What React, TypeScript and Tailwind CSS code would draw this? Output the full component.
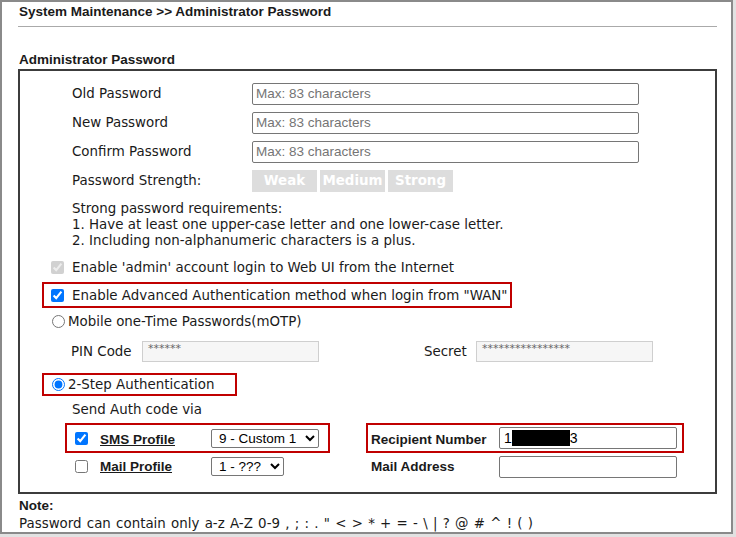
import React from 'react';

const verdana = 'font-["DejaVu_Sans",Verdana,sans-serif]';
const arial = 'font-["Liberation_Sans",Arial,sans-serif]';

function PwRow({ label }: { label: string }) {
    return (
        <div className="flex h-[29px] items-center pl-[52px]">
            <span className={`w-[180px] pt-[2px] text-[13.4px] text-[#1a1a1a] ${verdana}`}>{label}</span>
            <input
                type="password"
                placeholder="Max: 83 characters"
                className={`h-[22px] w-[387px] rounded-[2px] border border-[#767676] px-[3px] text-[13.5px] placeholder:text-[#757575] ${arial}`}
            />
        </div>
    );
}

export default function App() {
    return (
        <div className="h-[537px] w-[736px] bg-[#e2e2e2]">
            <div className="h-[534px] w-[733px] border-2 border-[#8a8a8a] bg-white">
                <div className={`h-[24px] pl-[17px] pt-[2px] text-[13.5px] font-bold leading-[16px] text-[#1a1a1a] ${arial}`}>
                    System Maintenance &gt;&gt; Administrator Password
                </div>
                <div className="ml-[16px] h-px w-[699px] bg-[#aaaaaa]" />

                <div className={`ml-[17px] mt-[25px] text-[13.5px] font-bold leading-[16px] text-[#1a1a1a] ${arial}`}>
                    Administrator Password
                </div>

                <div className="ml-[16px] mt-px w-[699px] border-2 border-[#3c3c3c] pb-[15px] pt-[8px]">
                    <PwRow label="Old Password" />
                    <PwRow label="New Password" />
                    <PwRow label="Confirm Password" />
                    <div className="flex h-[29px] items-center pl-[52px]">
                        <span className={`w-[180px] pt-[2px] text-[13.4px] text-[#1a1a1a] ${verdana}`}>Password Strength:</span>
                        <div className={`flex gap-[3px] text-[13.4px] font-bold text-white ${verdana}`}>
                            <span className="flex h-[22px] w-[65px] items-center justify-center bg-[#dddddd] pt-[2px]">Weak</span>
                            <span className="flex h-[22px] w-[65px] items-center justify-center bg-[#dddddd] pt-[2px]">Medium</span>
                            <span className="flex h-[22px] w-[65px] items-center justify-center bg-[#dddddd] pt-[2px]">Strong</span>
                        </div>
                    </div>

                    <div className={`mt-[6px] pl-[52px] text-[13.4px] leading-[16px] text-[#1a1a1a] ${verdana}`}>
                        <div>Strong password requirements:</div>
                        <div>1. Have at least one upper-case letter and one lower-case letter.</div>
                        <div>2. Including non-alphanumeric characters is a plus.</div>
                    </div>

                    <div className={`mt-[8px] flex h-[20px] items-center pl-[31px] text-[13.4px] text-[#1a1a1a] ${verdana}`}>
                        <input type="checkbox" checked disabled readOnly className="m-0 h-[13px] w-[13px]" />
                        <span className="ml-[8px] pt-[2px]">Enable 'admin' account login to Web UI from the Internet</span>
                    </div>

                    <div className={`ml-[22px] mt-[5px] flex h-[26px] w-[470px] items-center border-2 border-[#c00000] pl-[7px] text-[13.4px] text-[#1a1a1a] ${verdana}`}>
                        <input type="checkbox" checked readOnly className="m-0 h-[13px] w-[13px] accent-[#0075ff]" />
                        <span className="ml-[8px] pt-[2px]">Enable Advanced Authentication method when login from "WAN"</span>
                    </div>

                    <div className={`mt-[3px] flex h-[20px] items-center pl-[32px] text-[13.4px] text-[#1a1a1a] ${verdana}`}>
                        <input type="radio" name="m" readOnly className="m-0 h-[13px] w-[13px]" />
                        <span className="ml-[3px] pt-[2px]">Mobile one-Time Passwords(mOTP)</span>
                    </div>

                    <div className={`mt-[8px] flex h-[24px] items-center text-[13.4px] text-[#1a1a1a] ${verdana}`}>
                        <span className="w-[122px] pl-[51px] pt-[2px]">PIN Code</span>
                        <div className="h-[21px] w-[177px] border border-[#cfcfcf] bg-[#f6f6f6] pl-[5px] text-[11px] leading-[14px] text-[#666]">
                            ******
                        </div>
                        <span className="ml-[105px] w-[52px] pt-[2px]">Secret</span>
                        <div className="h-[21px] w-[177px] border border-[#cfcfcf] bg-[#f6f6f6] pl-[5px] text-[11px] leading-[14px] text-[#666]">
                            ****************
                        </div>
                    </div>

                    <div className={`ml-[22px] mt-[10px] flex h-[23px] w-[195px] items-center border-2 border-[#c00000] pl-[8px] text-[13.4px] text-[#1a1a1a] ${verdana}`}>
                        <input type="radio" name="m" checked readOnly className="m-0 h-[13px] w-[13px] accent-[#0075ff]" />
                        <span className="ml-[3px] pt-[2px]">2-Step Authentication</span>
                    </div>

                    <div className={`mt-[6px] pl-[52px] text-[13.4px] leading-[16px] text-[#1a1a1a] ${verdana}`}>Send Auth code via</div>

                    <div className={`mt-[5px] flex text-[13.5px] font-bold text-[#1a1a1a] ${arial}`}>
                        <div className="ml-[45px] flex h-[30px] w-[265px] items-center border-2 border-[#c00000] pl-[8px]">
                            <input type="checkbox" checked readOnly className="m-0 h-[13px] w-[13px] accent-[#0075ff]" />
                            <span className="ml-[12px] mt-[4px] w-[111px] underline">SMS Profile</span>
                            <select className="h-[19px] w-[108px] rounded-[2px] border border-[#767676] pl-[3px] text-[13.5px] font-normal text-black">
                                <option>9 - Custom 1</option>
                            </select>
                        </div>
                        <div className="ml-[36px] flex h-[30px] w-[318px] items-center border-2 border-[#c00000] pl-[3px]">
                            <span className="mt-[4px] w-[128px]">Recipient Number</span>
                            <div className="flex h-[22px] w-[178px] items-center rounded-[2px] border border-[#767676] pl-[4px] text-[14px] font-normal text-black">
                                1<span className="h-[16px] w-[58px] bg-black" />3
                            </div>
                        </div>
                    </div>

                    <div className={`mt-[3px] flex h-[21px] items-center text-[13.5px] font-bold text-[#1a1a1a] ${arial}`}>
                        <input type="checkbox" readOnly className="m-0 ml-[55px] h-[13px] w-[13px]" />
                        <span className="ml-[12px] mt-[2px] w-[111px] underline">Mail Profile</span>
                        <select className="h-[19px] w-[73px] rounded-[2px] border border-[#767676] pl-[3px] text-[13.5px] font-normal text-black">
                            <option>1 - ???</option>
                        </select>
                        <span className="ml-[87px] mt-[2px] w-[128px]">Mail Address</span>
                        <div className="h-[22px] w-[178px] rounded-[2px] border border-[#767676]" />
                    </div>
                </div>

                <div className={`ml-[17px] mt-[4px] text-[13.5px] font-bold leading-[16px] text-[#1a1a1a] ${arial}`}>Note:</div>
                <div className={`ml-[17px] mt-[2px] text-[13.4px] leading-[16px] text-[#1a1a1a] [word-spacing:1px] ${verdana}`}>
                    Password can contain only a-z A-Z 0-9 , ; : . " &lt; &gt; * + = - \ | ? @ # ^ ! ( )
                </div>
            </div>
        </div>
    );
}
